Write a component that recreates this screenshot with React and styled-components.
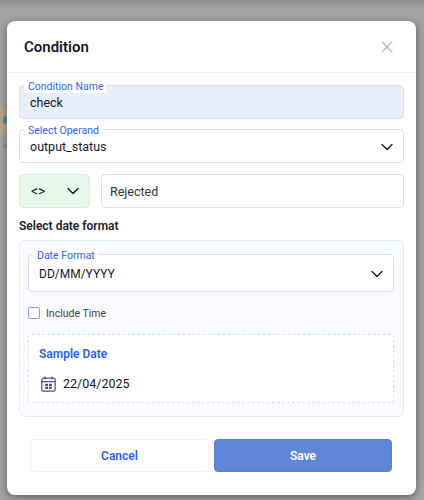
import React from 'react';
import styled, { createGlobalStyle } from 'styled-components';
import { ChevronDown, X } from 'lucide-react';

const Global = createGlobalStyle`
    html, body { margin: 0; padding: 0; }
    body { font-family: "Roboto", "Liberation Sans", sans-serif; }
    * { box-sizing: border-box; }
`;

const Backdrop = styled.div`
    width: 424px;
    height: 500px;
    overflow: hidden;
    position: relative;
    background: linear-gradient(180deg, #8f8f8f 0, #a3a3a3 8px, #a5a5a5 100%);
    padding: 21px 8px 0 7px;
`;

const Blob = styled.div`
    position: absolute;
    left: -16px;
    top: 105px;
    width: 24px;
    height: 32px;
    border-radius: 50%;
    background: #a9a49b;
    border: 6px solid #b9a98c;
    filter: blur(1px);
`;

const BlobDot = styled.div`
    position: absolute;
    left: 3px;
    top: 116px;
    width: 4px;
    height: 8px;
    border-radius: 2px;
    background: #5f80b8;
    filter: blur(0.6px);
`;

const BlobSmudge = styled.div`
    position: absolute;
    left: 3px;
    top: 144px;
    width: 4px;
    height: 4px;
    background: #858585;
    filter: blur(1px);
`;

const Modal = styled.div`
    position: relative;
    width: 409px;
    height: 474px;
    background: #fff;
    border-radius: 8px;
    box-shadow: 0 2px 8px rgba(0, 0, 0, 0.45);
`;

const Header = styled.div`
    height: 52px;
    padding: 0 19px 0 17px;
    display: flex;
    align-items: center;
    justify-content: space-between;
    border-bottom: 1px solid #f1f3f8;
`;

const Title = styled.h2`
    margin: 0;
    font-size: 15px;
    font-weight: 600;
    color: #14171f;
`;

const Body = styled.div`
    padding: 12px 12px 0;
    display: flex;
    flex-direction: column;
`;

const Field = styled.div`
    position: relative;
    height: ${p => p.$height || 34}px;
    margin-bottom: ${p => p.$mb || 0}px;
    padding: 1px 6px 0 10px;
    display: flex;
    align-items: center;
    justify-content: space-between;
    background: ${p => p.$bg || '#fff'};
    border: 1px solid #d5def5;
    border-radius: 4px;
    font-size: ${p => p.$fontSize || 12.5}px;
    color: #14171f;
`;

const FieldLabel = styled.span`
    position: absolute;
    left: 4px;
    top: -5px;
    padding: 0 4px;
    height: 12px;
    line-height: 12px;
    font-size: 10.5px;
    color: #2a62f2;
    background: #fff;
`;

const OperatorRow = styled.div`
    display: grid;
    grid-template-columns: 71px 1fr;
    gap: 11px;
    margin-bottom: 11px;
`;

const OperatorSelect = styled.div`
    height: 34px;
    padding: 0 6px 0 11px;
    display: flex;
    align-items: center;
    justify-content: space-between;
    background: #e6f8ec;
    border: 1px solid #d5eede;
    border-radius: 4px;
    font-size: 14px;
    color: #14171f;
`;

const TextInput = styled.div`
    height: 34px;
    padding: 0 8px;
    display: flex;
    align-items: center;
    background: #fff;
    border: 1px solid #d5def5;
    border-radius: 4px;
    font-size: 12.5px;
    color: #30343c;
`;

const SectionTitle = styled.div`
    font-size: 12px;
    line-height: 14px;
    font-weight: 600;
    color: #1c2027;
    margin-bottom: 7px;
`;

const Panel = styled.div`
    height: 177px;
    padding: 13px 9px 0 8px;
    background: #f9faff;
    border: 1px solid #e1e8f9;
    border-radius: 6px;
`;

const CheckRow = styled.label`
    display: flex;
    align-items: center;
    gap: 6px;
    height: 12px;
    margin: 15px 0 15px;
    font-size: 10.5px;
    color: #3a3e47;
`;

const Checkbox = styled.span`
    width: 12px;
    height: 12px;
    background: #fff;
    border: 1.5px solid #8c9cc6;
    border-radius: 2px;
`;

const Sample = styled.div`
    height: 69px;
    padding: 12px 10px 0;
    background: #fff;
    border: 1px dashed #d5e1fb;
    border-radius: 4px;
`;

const SampleTitle = styled.div`
    font-size: 12px;
    line-height: 14px;
    font-weight: 600;
    color: #1f5ffa;
    margin-bottom: 15px;
`;

const SampleDate = styled.div`
    display: flex;
    align-items: center;
    gap: 7px;
    padding-left: 2px;
    font-size: 12.5px;
    line-height: 16px;
    color: #14171f;
`;

const Footer = styled.div`
    display: grid;
    grid-template-columns: 179px 178px;
    gap: 5px;
    padding: 22px 23px 0;
`;

const Button = styled.button`
    height: 33px;
    font-family: inherit;
    font-size: 12px;
    font-weight: 600;
    border-radius: 4px;
    color: ${p => p.$primary ? '#fff' : '#1f5ffa'};
    background: ${p => p.$primary ? '#5f86d8' : '#fff'};
    border: 1px solid ${p => p.$primary ? '#5a80d4' : '#f0f2f7'};
`;

const CalendarIcon = () => (
    <svg width="15" height="16" viewBox="0 0 15 16" fill="none" stroke="#3f5484" strokeWidth="1.2">
        <rect x="0.8" y="2.2" width="13.4" height="13" rx="1.6" />
        <path d="M0.8 5.6H14.2M4 0.6V3.4M11 0.6V3.4" />
        <path d="M4.2 7.8H7V10H4.2zM8 7.8H10.8V10H8zM4.2 10.8H7V13H4.2zM8 10.8H10.8V13H8z" fill="#3f5484" stroke="none" />
    </svg>
);

const App = () => (
    <Backdrop>
        <Global />
        <Blob />
        <BlobDot />
        <BlobSmudge />
        <Modal>
            <Header>
                <Title>Condition</Title>
                <X size={20} color="#a9b7d6" strokeWidth={1.4} />
            </Header>
            <Body>
                <Field $bg="#e8eefb" $mb={10}>
                    <FieldLabel>Condition Name</FieldLabel>
                    <span>check</span>
                </Field>
                <Field $mb={11}>
                    <FieldLabel>Select Operand</FieldLabel>
                    <span>output_status</span>
                    <ChevronDown size={20} color="#14171f" strokeWidth={1.6} />
                </Field>
                <OperatorRow>
                    <OperatorSelect>
                        <span>&lt;&gt;</span>
                        <ChevronDown size={20} color="#14171f" strokeWidth={1.6} />
                    </OperatorSelect>
                    <TextInput>Rejected</TextInput>
                </OperatorRow>
                <SectionTitle>Select date format</SectionTitle>
                <Panel>
                    <Field $height={38} $fontSize={12}>
                        <FieldLabel>Date Format</FieldLabel>
                        <span>DD/MM/YYYY</span>
                        <ChevronDown size={20} color="#14171f" strokeWidth={1.6} />
                    </Field>
                    <CheckRow>
                        <Checkbox />
                        Include Time
                    </CheckRow>
                    <Sample>
                        <SampleTitle>Sample Date</SampleTitle>
                        <SampleDate>
                            <CalendarIcon />
                            22/04/2025
                        </SampleDate>
                    </Sample>
                </Panel>
            </Body>
            <Footer>
                <Button>Cancel</Button>
                <Button $primary>Save</Button>
            </Footer>
        </Modal>
    </Backdrop>
);

export default App;
